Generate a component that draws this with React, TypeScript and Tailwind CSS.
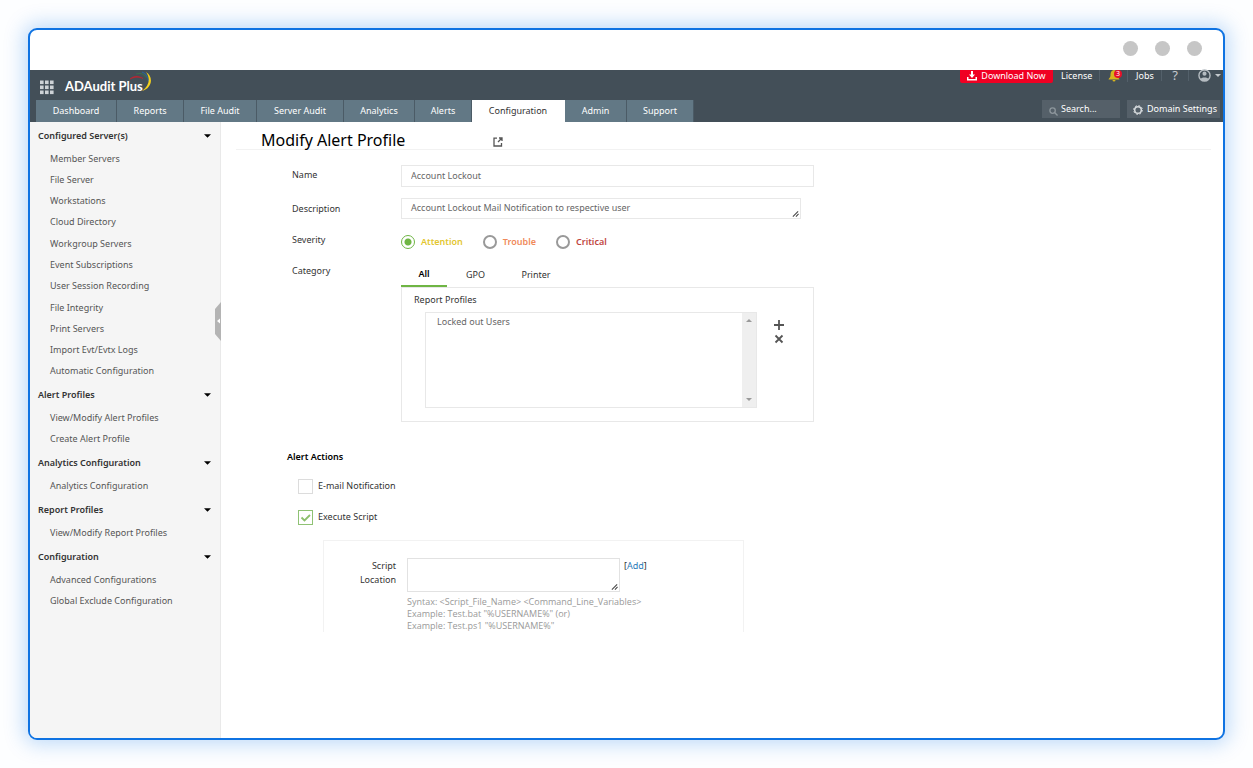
import { ReactNode } from "react";

const navTabs = [
    { label: "Dashboard", width: "w-[81px]" },
    { label: "Reports", width: "w-[67px]" },
    { label: "File Audit", width: "w-[73px]" },
    { label: "Server Audit", width: "w-[87px]" },
    { label: "Analytics", width: "w-[71px]" },
    { label: "Alerts", width: "w-[57px]" },
    { label: "Configuration", width: "w-[93px]" },
    { label: "Admin", width: "w-[62px]" },
    { label: "Support", width: "w-[67px]" },
];

const menu = [
    {
        title: "Configured Server(s)",
        height: "min-h-[234px]",
        items: [
            "Member Servers",
            "File Server",
            "Workstations",
            "Cloud Directory",
            "Workgroup Servers",
            "Event Subscriptions",
            "User Session Recording",
            "File Integrity",
            "Print Servers",
            "Import Evt/Evtx Logs",
            "Automatic Configuration",
        ],
    },
    { title: "Alert Profiles", height: "min-h-[43px]", items: ["View/Modify Alert Profiles", "Create Alert Profile"] },
    { title: "Analytics Configuration", height: "min-h-[22px]", items: ["Analytics Configuration"] },
    { title: "Report Profiles", height: "min-h-[22px]", items: ["View/Modify Report Profiles"] },
    { title: "Configuration", height: "min-h-[43px]", items: ["Advanced Configurations", "Global Exclude Configuration"] },
];

const severities = [
    { label: "Attention", color: "text-[#e3c62f]" },
    { label: "Trouble", color: "text-[#f08a5a]" },
    { label: "Critical", color: "text-[#c0453f]" },
];

function Caret({ className }: { className?: string }) {
    return (
        <svg viewBox="0 0 8 4" className={className}>
            <path d="M0 0h8L4 4z" fill="currentColor" />
        </svg>
    );
}

function ResizeGrip() {
    return (
        <svg viewBox="0 0 8 8" className="pointer-events-none absolute right-[2px] bottom-[2px] size-[7px]" stroke="#444" strokeWidth="1.2">
            <path d="M1 7.5 7 1.5M4.5 7.5 7.5 4.5" fill="none" />
        </svg>
    );
}

function Header() {
    return (
        <header className="bg-[#434f58] text-white">
            <div className="flex h-[30px] justify-between">
                <div className="flex items-center pl-[10px]">
                    <svg viewBox="0 0 14 15" className="mt-1 h-[15px] w-[14px]" fill="#cdd2d6">
                        {[0, 5, 10].map((y) => [0, 5, 10].map((x) => <rect key={`${x}-${y}`} x={x} y={y + 0.5} width="3.6" height="3.6" />))}
                    </svg>
                    <span className="mt-[2px] ml-[11px] font-['Lato',sans-serif] text-[13px] leading-4 font-bold whitespace-nowrap">ADAudit Plus</span>
                    <svg viewBox="0 0 24 22" className="-ml-[14px] h-[22px] w-6 self-start" fill="none">
                        <path d="M1 9C5 5.5 9 5.5 14 8.500C10 6.800 6 6.800 1 9Z" fill="#c4232f" stroke="#c4232f" strokeWidth="0.5" />
                        <path d="M7 4C11 2.500 15 4 18 8" stroke="#3c6a50" strokeWidth="1.200" />
                        <path d="M13 2C17 3.500 19 7 19.500 11" stroke="#2b629a" strokeWidth="1.200" />
                        <path d="M17 2C25 7 23 18 13 21C20 16 22 9 17 2Z" fill="#f5d21c" />
                    </svg>
                </div>
                <div className="flex h-[11px] items-center text-[9px] leading-[11px] whitespace-nowrap">
                    <a href="#download" className="flex h-[13px] w-[93px] items-center justify-center gap-1 self-start rounded-b-xs bg-[#f00023] pb-[2px]">
                        <svg viewBox="0 0 10 10" className="size-[10px]" fill="#fff">
                            <path d="M4 0h2v3.500h2L5 7 2 3.500h2zM0 6h1.500v2h7V6H10v3.500H0z" />
                        </svg>
                        Download Now
                    </a>
                    <a href="#license" className="w-[47px] border-r border-[#53606a] pl-2">License</a>
                    <a href="#alerts" aria-label="Notifications" className="relative flex h-3 w-7 justify-center border-r border-[#53606a]">
                        <svg viewBox="0 0 12 12" className="size-3" fill="#d6b41e">
                            <path d="M6 0C3 .5 2.500 3 2.500 5.500 2.500 7.500 1 8 .5 9.500h11C11 8 9.500 7.500 9.500 5.500 9.500 3 9 .5 6 0zM4.500 10h3a1.500 1.500 0 0 1-3 0z" />
                        </svg>
                        <span className="absolute top-0 right-[5px] size-2 rounded-full bg-[#e8102a] text-center text-[7px] leading-2">3</span>
                    </a>
                    <a href="#jobs" className="w-[34px] border-r border-[#53606a] pl-2">Jobs</a>
                    <a href="#help" className="w-[27px] border-r border-[#53606a] text-center text-[13px] text-[#c3c9cd]">?</a>
                    <button aria-label="Account" className="flex w-[34px] items-center gap-1 pl-[9px] text-[#c3c9cd]">
                        <svg viewBox="0 0 14 14" className="size-[13px] shrink-0">
                            <circle cx="7" cy="7" r="6" fill="none" stroke="#b5bcc1" strokeWidth="1.500" />
                            <circle cx="7" cy="5" r="2.200" fill="#b5bcc1" />
                            <path d="M2.500 11C3.500 8.500 10.500 8.500 11.500 11 9 13.500 5 13.500 2.500 11z" fill="#b5bcc1" />
                        </svg>
                        <Caret className="h-[3px] w-[6px] shrink-0" />
                    </button>
                </div>
            </div>
            <div className="flex h-[22px] justify-between pr-[3px]">
                <nav className="flex pl-[6px] text-[9px] whitespace-nowrap">
                    {navTabs.map((tab) => (
                        <a
                            key={tab.label}
                            href="#tab"
                            className={`flex items-center justify-center border-r ${tab.width} ${tab.label === "Configuration" ? "border-white bg-white text-[#333]" : "border-[#4b5b66] bg-[#627885]"}`}
                        >
                            {tab.label}
                        </a>
                    ))}
                </nav>
                <div className="flex h-[18px] gap-[7px] text-[9px] whitespace-nowrap">
                    <label className="flex w-[78px] items-center gap-[3px] bg-[#556069] pl-[7px]">
                        <svg viewBox="0 0 10 10" className="mt-1 size-[9px] shrink-0" fill="none" stroke="#8d969c" strokeWidth="1.500">
                            <circle cx="4" cy="4" r="3" />
                            <path d="M6.200 6.200 9.500 9.500" />
                        </svg>
                        <input aria-label="Search" placeholder="Search..." className="w-full min-w-0 outline-none placeholder:text-white" />
                    </label>
                    <button className="flex w-[93px] items-center gap-1 bg-[#556069] pl-[6px]">
                        <svg viewBox="0 0 10 10" className="mt-[2px] size-[10px] shrink-0" fill="none" stroke="#d5d9dc">
                            <circle cx="5" cy="5" r="3.300" strokeWidth="1.500" />
                            <circle cx="5" cy="5" r="4.400" strokeWidth="1" strokeDasharray="1.700 1.750" />
                        </svg>
                        Domain Settings
                    </button>
                </div>
            </div>
        </header>
    );
}

function Sidebar() {
    return (
        <aside className="relative w-[191px] shrink-0 border-r border-[#e9e9e9] bg-[#f5f5f5] pt-[1px] text-[9px] leading-4">
            {menu.map((section) => (
                <section key={section.title}>
                    <h2>
                        <button className="flex h-[25px] w-full items-center justify-between pr-[9px] pl-2 font-semibold text-[#333]">
                            {section.title}
                            <Caret className="h-1 w-[7px] text-black" />
                        </button>
                    </h2>
                    <ul className={`grid items-center ${section.height}`}>
                        {section.items.map((item) => (
                            <li key={item} className="pl-5">
                                <a href="#item" className="text-[#555]">{item}</a>
                            </li>
                        ))}
                    </ul>
                </section>
            ))}
            <button aria-label="Collapse menu" className="absolute top-[180px] -right-px">
                <svg viewBox="0 0 6 39" className="h-[39px] w-[6px]">
                    <path d="M6 0v39L0 32V7z" fill="#b4b4b4" />
                    <path d="M5 16.500v5L2 19z" fill="#fff" />
                </svg>
            </button>
        </aside>
    );
}

function Row({ label, htmlFor, className, children }: { label: string; htmlFor?: string; className?: string; children: ReactNode }) {
    return (
        <div className="flex">
            <label htmlFor={htmlFor} className={`w-[109px] shrink-0 text-[#333] ${className ?? ""}`}>{label}</label>
            {children}
        </div>
    );
}

function ReportProfiles() {
    return (
        <div className="min-w-0 flex-1">
            <div role="tablist" className="flex h-6 text-[#333]">
                <button role="tab" className="w-[46px] border-b-2 border-[#6fb544] font-semibold text-black">All</button>
                <button role="tab" className="w-[57px]">GPO</button>
                <button role="tab" className="w-16">Printer</button>
            </div>
            <div className="border border-[#e8e8e8] pt-1 pb-[13px] pl-3">
                <label htmlFor="reports" className="block text-[#333]">Report Profiles</label>
                <div className="mt-1 flex pl-[11px]">
                    <div className="flex h-24 w-[332px] border border-[#e8e8e8]">
                        <select id="reports" multiple className="min-w-0 flex-1 appearance-none overflow-hidden text-[#666] outline-none">
                            <option className="px-[11px] py-[2px]">Locked out Users</option>
                        </select>
                        <div className="flex w-[14px] flex-col items-center justify-between bg-[#efefef] py-[6px] text-[#9a9a9a]">
                            <Caret className="h-[3px] w-[6px] rotate-180" />
                            <Caret className="h-[3px] w-[6px]" />
                        </div>
                    </div>
                    <div className="ml-[17px] flex flex-col gap-1 pt-2 text-[#555]">
                        <button aria-label="Add report">
                            <svg viewBox="0 0 10 10" className="size-[10px]" stroke="currentColor" strokeWidth="1.800">
                                <path d="M5 0v10M0 5h10" />
                            </svg>
                        </button>
                        <button aria-label="Remove report">
                            <svg viewBox="0 0 10 10" className="size-[10px]" stroke="currentColor" strokeWidth="1.800">
                                <path d="M1.500 1.500l7 7M8.500 1.500l-7 7" />
                            </svg>
                        </button>
                    </div>
                </div>
            </div>
        </div>
    );
}

function ActionCheck({ id, label, checked }: { id: string; label: string; checked?: boolean }) {
    return (
        <div className="flex items-center gap-[5px]">
            <span className="relative flex">
                <input
                    id={id}
                    type="checkbox"
                    defaultChecked={checked}
                    className="peer size-[15px] appearance-none border border-[#dcdcdc] checked:border-[#8fc274]"
                />
                <svg viewBox="0 0 15 15" className="pointer-events-none absolute inset-0 hidden size-[15px] peer-checked:block" fill="none" stroke="#8cbf6c" strokeWidth="1.800">
                    <path d="M3.500 7.500 6.500 10.500 12 5" />
                </svg>
            </span>
            <label htmlFor={id}>{label}</label>
        </div>
    );
}

function AlertForm() {
    return (
        <form className="text-[9px] leading-4">
            <div className="flex max-w-[593px] flex-col pt-[15px] pl-[71px]">
                <Row label="Name" htmlFor="name" className="pt-[2px]">
                    <input id="name" defaultValue="Account Lockout" className="h-[22px] min-w-0 flex-1 border border-[#e8e8e8] px-[9px] pb-[1px] text-[#666] outline-none" />
                </Row>
                <div className="mt-[11px]">
                    <Row label="Description" htmlFor="description" className="pt-[3px]">
                        <div className="relative mr-[13px] flex min-w-0 flex-1">
                            <textarea
                                id="description"
                                defaultValue="Account Lockout Mail Notification to respective user"
                                className="h-[21px] w-full resize-none overflow-hidden border border-[#e8e8e8] px-[9px] py-[1px] text-[#666] outline-none"
                            />
                            <ResizeGrip />
                        </div>
                    </Row>
                </div>
                <div className="mt-[13px]">
                    <Row label="Severity">
                        <div className="flex gap-5 pt-[2px]">
                            {severities.map((severity) => (
                                <label key={severity.label} className={`flex items-center gap-[6px] font-semibold ${severity.color}`}>
                                    <input
                                        type="radio"
                                        name="severity"
                                        defaultChecked={severity.label === "Attention"}
                                        className="size-[14px] appearance-none rounded-full border-2 border-[#999] checked:border checked:border-[#6fb544] checked:bg-[radial-gradient(circle,#6fb544_3px,white_4px)]"
                                    />
                                    {severity.label}
                                </label>
                            ))}
                        </div>
                    </Row>
                </div>
                <div className="mt-[13px]">
                    <Row label="Category">
                        <ReportProfiles />
                    </Row>
                </div>
            </div>

            <div className="pt-[27px] pl-[66px] text-[#333]">
                <h2 className="font-semibold text-black">Alert Actions</h2>
                <div className="flex flex-col gap-[15px] pt-[13px] pl-[11px]">
                    <ActionCheck id="email" label="E-mail Notification" />
                    <ActionCheck id="script" label="Execute Script" checked />
                </div>
                <div className="mt-[15px] ml-9 flex max-w-[421px] border border-b-0 border-[#f2f2f2] pt-[17px]">
                    <label htmlFor="location" className="mt-[1px] mr-[11px] ml-4 w-14 text-right leading-[14px]">Script Location</label>
                    <div className="text-[#999]">
                        <div className="flex gap-1">
                            <div className="relative flex w-[213px]">
                                <textarea id="location" className="h-[34px] w-full resize-none border border-[#e2e2e2] outline-none" />
                                <ResizeGrip />
                            </div>
                            <span className="text-[#333]">[<a href="#add" className="text-[#2a7ab8]">Add</a>]</span>
                        </div>
                        <p className="mt-1 font-['Open_Sans',sans-serif] leading-3">
                            Syntax: &lt;Script_File_Name&gt; &lt;Command_Line_Variables&gt;<br />
                            Example: Test.bat "%USERNAME%" (or)<br />
                            Example: Test.ps1 "%USERNAME%"
                        </p>
                    </div>
                </div>
            </div>
        </form>
    );
}

export default function App() {
    return (
        <div className="flex min-h-screen bg-[#fdfeff] p-7 font-['Noto_Sans',sans-serif]">
            <div className="flex flex-1 flex-col overflow-hidden rounded-[9px] border-2 border-[#0f73e2] bg-white shadow-[0_0_20px_4px_rgba(0,110,230,0.25)]">
                <div className="flex h-10 items-center justify-end gap-[17px] pr-[21px] pb-[3px]">
                    <span className="size-[15px] rounded-full bg-[#c6c6c6]" />
                    <span className="size-[15px] rounded-full bg-[#c6c6c6]" />
                    <span className="size-[15px] rounded-full bg-[#c6c6c6]" />
                </div>
                <Header />
                <div className="flex flex-1">
                    <Sidebar />
                    <main className="min-w-0 flex-1">
                        <div className="mr-3 ml-[15px] flex h-7 items-center border-b border-[#f2f2f2] pl-[25px]">
                            <h1 className="w-[232px] pt-2 text-[16px] leading-6 text-black">Modify Alert Profile</h1>
                            <a href="#open" aria-label="Open in new window" className="mt-3">
                                <svg viewBox="0 0 10 10" className="size-[10px]" fill="none" stroke="#555" strokeWidth="1.300">
                                    <path d="M4 1.200H1V9h7.500V6M5 5l3.500-3.500M6 1h3v3" />
                                </svg>
                            </a>
                        </div>
                        <AlertForm />
                    </main>
                </div>
            </div>
        </div>
    );
}
